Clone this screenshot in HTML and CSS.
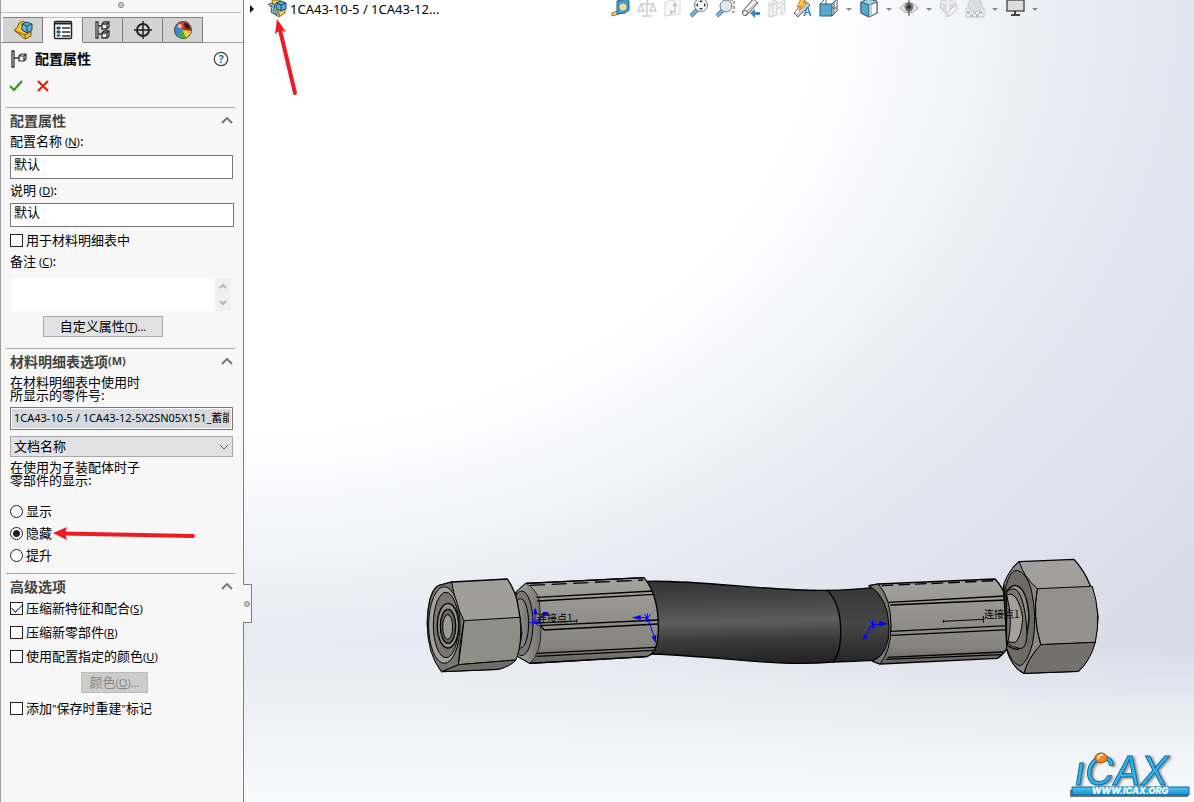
FILE: index.html
```html
<!DOCTYPE html>
<html lang="zh-CN">
<head>
<meta charset="utf-8">
<title>配置属性</title>
<link rel="stylesheet" href="styles.css">
</head>
<body>
<div class="app">
  <aside class="panel">
    <div class="grip"><span class="dot"></span></div>
    <nav class="tabs">
      <button class="tab" aria-label="设计树"><svg width="20" height="20" viewBox="0 0 20 20"><path d="M1 10l3-2 2-5 4-2 3 2 5 1v12l-6 3z" fill="#f3c42c" stroke="#7b5a08"/><path d="M2 11l10 4v4M12 15l6-3" fill="none" stroke="#7b5a08"/><path d="M9 4l5-2 5 2v6l-5 3-5-3z" fill="#62b3d8" stroke="#164a68"/><path d="M9 4l5 2 5-2M14 6v7" fill="none" stroke="#164a68"/></svg></button>
      <button class="tab active" aria-label="属性"><svg width="20" height="20" viewBox="0 0 20 20"><rect x="1.500" y="1.500" width="17" height="17" rx="1" fill="#fff" stroke="#222" stroke-width="1.500"/><path d="M2 3.500h16" stroke="#222" stroke-width="2"/><path d="M4 7h3v2H4zM4 11h3v2H4zM4 15h3v1H4z" fill="#2387af" stroke="#174e66"/><path d="M9 8h8M9 12h8M9 16h8" stroke="#333" stroke-width="1.300"/></svg></button>
      <button class="tab" aria-label="配置"><svg width="20" height="20" viewBox="0 0 20 20"><path d="M3 2v16h2V2zM5 6h5M5 14h5" fill="#fff" stroke="#333" stroke-width="1.300"/><path d="M9 4l2-2h5v5l-2 2H9zM9 4h5v5M14 4l2-2M9 13l2-2h5v5l-2 2H9zM9 13h5v5M14 13l2-2" fill="#eee" stroke="#333" stroke-width="1.300"/></svg></button>
      <button class="tab" aria-label="尺寸"><svg width="20" height="20" viewBox="0 0 20 20"><circle cx="10" cy="10" r="6" fill="none" stroke="#222" stroke-width="2"/><path d="M10 1v18M1 10h18" stroke="#222" stroke-width="1.500"/></svg></button>
      <button class="tab" aria-label="外观"><svg width="20" height="20" viewBox="0 0 20 20"><path d="M10 10L3 5a9 9 0 0 1 13-2z" fill="#df352b"/><path d="M10 10L3 5a9 9 0 0 0 1 12z" fill="#3b86ce"/><path d="M10 10L4 16a9 9 0 0 0 9 2z" fill="#3fae49"/><path d="M10 10l3 8a9 9 0 0 0 5-8z" fill="#f5cf28"/><path d="M10 10l8 1a9 9 0 0 0-5-9z" fill="#b92c22"/><path d="M11 3c4 0 6 3 6 6-3 0-6-2-6-6z" fill="#222"/><circle cx="7" cy="6" r="2" fill="#fff" opacity=".7"/><circle cx="10" cy="10" r="8.500" fill="none" stroke="#555"/></svg></button>
    </nav>
    <header class="title-row">
      <svg width="18" height="18" viewBox="0 0 18 18"><path d="M2 1v16h2V1zM4 8h6" fill="#fff" stroke="#333" stroke-width="1.300"/><path d="M9 6l2-2h5v5l-2 2H9zM9 6h5v5M14 6l2-2" fill="#eee" stroke="#333" stroke-width="1.200"/></svg>
      <h1>配置属性</h1>
      <button class="plain help" aria-label="帮助"><svg width="16" height="16" viewBox="0 0 16 16"><circle cx="8" cy="8" r="6.700" fill="#fff" stroke="#444" stroke-width="1.200"/><text x="8" y="12" class="help-mark">?</text></svg></button>
    </header>
    <div class="confirm">
      <button class="plain" aria-label="确定"><svg width="14" height="12" viewBox="0 0 14 12"><path d="M1 6l4 4 8-9" fill="none" stroke="#2f9a12" stroke-width="2.200"/></svg></button>
      <button class="plain" aria-label="取消"><svg width="12" height="12" viewBox="0 0 12 12"><path d="M1 1l10 10M11 1L1 11" stroke="#e02500" stroke-width="2.200"/></svg></button>
    </div>

    <section class="group">
      <h2>配置属性<svg class="chev" width="12" height="7" viewBox="0 0 12 7"><path d="M1 6l5-5 5 5"/></svg></h2>
      <label class="caption" for="name">配置名称 <small>(<u>N</u>)</small>:</label>
      <input class="field" id="name" type="text" value="默认">
      <label class="caption second" for="desc">说明 <small>(<u>D</u>)</small>:</label>
      <input class="field wide" id="desc" type="text" value="默认">
      <label class="option tall"><input type="checkbox">用于材料明细表中</label>
      <label class="caption note" for="memo">备注 <small>(<u>C</u>)</small>:</label>
      <div class="memo">
        <textarea id="memo"></textarea>
        <div class="scroll">
          <svg width="8" height="6" viewBox="0 0 8 6"><path d="M1 5l3-3 3 3"/></svg>
          <svg width="8" height="6" viewBox="0 0 8 6"><path d="M1 1l3 3 3-3"/></svg>
        </div>
      </div>
      <button class="push custom">自定义属性<small>(<u>T</u>)...</small></button>
    </section>

    <section class="group">
      <h2>材料明细表选项<small>(M)</small><svg class="chev" width="12" height="7" viewBox="0 0 12 7"><path d="M1 6l5-5 5 5"/></svg></h2>
      <label class="para" for="part">在材料明细表中使用时<br>所显示的零件号:</label>
      <input class="field part" id="part" type="text" readonly value="1CA43-10-5 / 1CA43-12-5X2SN05X151_蓄能">
      <div class="select-box">
        <select aria-label="零件号来源"><option>文档名称</option></select>
        <svg width="10" height="6" viewBox="0 0 10 6"><path d="M1 1l4 4 4-4"/></svg>
      </div>
      <p class="para">在使用为子装配体时子<br>零部件的显示:</p>
      <div class="radios">
        <label class="option"><input type="radio" name="show">显示</label>
        <label class="option"><input type="radio" name="show" checked>隐藏
          <svg class="pointer" width="142" height="14" viewBox="0 0 142 14"><path d="M10 6.500L140 9" stroke="#ed1c24" stroke-width="4" stroke-linecap="round"/><path d="M0 6L14 0l-2 6.500L14 13z" fill="#ed1c24"/></svg>
        </label>
        <label class="option"><input type="radio" name="show">提升</label>
      </div>
    </section>

    <section class="group">
      <h2>高级选项<svg class="chev" width="12" height="7" viewBox="0 0 12 7"><path d="M1 6l5-5 5 5"/></svg></h2>
      <div class="checks">
        <label class="option"><input type="checkbox" checked><span>压缩新特征和配合<small>(<u>S</u>)</small></span></label>
        <label class="option"><input type="checkbox"><span>压缩新零部件<small>(<u>R</u>)</small></span></label>
        <label class="option"><input type="checkbox"><span>使用配置指定的颜色<small>(<u>U</u>)</small></span></label>
      </div>
      <button class="push color" disabled>颜色<small>(<u>O</u>)...</small></button>
      <label class="option rebuild"><input type="checkbox"><span>添加<small>"</small>保存时重建<small>"</small>标记</span></label>
    </section>
  </aside>

  <main class="viewport">
    <button class="handle" aria-label="折叠面板"><span class="dot"></span></button>
    <div class="topbar">
      <div class="tree">
        <svg width="6" height="8" viewBox="0 0 6 8"><path d="M1 0l4 4-4 4z" fill="#111"/></svg>
        <svg width="20" height="18" viewBox="0 0 20 18"><path d="M5 0h7l6 4v9l-6 4-5-3z" fill="#f4cf4a" stroke="#8a6a14"/><path d="M9 3l5-2 5 2v6l-5 2-5-2z" fill="#5da9d0" stroke="#174763"/><path d="M9 3l5 2 5-2M14 5v6" fill="none" stroke="#174763"/><path d="M2 6c3-3 5-1 4 2s-1 4 1 4 4 0 4 4" fill="none" stroke="#28536b" stroke-width="3.500"/><path d="M2 6c3-3 5-1 4 2s-1 4 1 4 4 0 4 4" fill="none" stroke="#a7d1e5" stroke-width="1.500"/></svg>
        <span>1CA43-10-5 / 1CA43-12...</span>
      </div>
      <div class="tools">
        <button class="plain" aria-label="测量"><svg width="20" height="18" viewBox="0 0 20 18"><path d="M7 11l-6 2v3l10-3" fill="#ffe08a" stroke="#806b35"/><path d="M6 1l9-2 3 2v9l-4 3-8 1z" fill="#4c9bc2" stroke="#27607d"/><circle cx="12" cy="7" r="3" fill="#ffd766" stroke="#efe8cf"/></svg></button>
        <button class="plain faded" aria-label="质量"><svg width="20" height="18" viewBox="0 0 20 18"><path d="M10 0v15M3 4h14M5 16h10M4 4L1 11h6zM16 4l-3 7h6z" fill="#eee" stroke="#888" stroke-width="1.500"/></svg></button>
        <button class="plain faded" aria-label="草图"><svg width="20" height="18" viewBox="0 0 20 18"><path d="M2 2l15-3v15L2 16z" fill="#f4f4f4" stroke="#999"/><path d="M7 12h5V4M7 12l2-2M7 12l2 2M10 6l2-3 2 3" fill="none" stroke="#777" stroke-width="1.500"/></svg></button>
        <button class="plain" aria-label="整屏显示"><svg width="20" height="18" viewBox="0 0 20 18"><path d="M8 10l-6 6" stroke="#447e9b" stroke-width="4"/><path d="M8 10l-6 6" stroke="#83bdd8" stroke-width="2"/><circle cx="12" cy="5" r="6.500" fill="#f5f8fa" stroke="#777"/><path d="M12 0l2 2h-4zM12 10l2-2h-4zM7 5l2-2v4zM17 5l-2-2v4z" fill="#333"/></svg></button>
        <button class="plain" aria-label="局部放大"><svg width="20" height="18" viewBox="0 0 20 18"><path d="M8 10l-6 6" stroke="#447e9b" stroke-width="4"/><path d="M8 10l-6 6" stroke="#83bdd8" stroke-width="2"/><path d="M15 0h4v12h-4" fill="none" stroke="#555" stroke-dasharray="3 2"/><circle cx="11" cy="6" r="6" fill="#dce8ef" stroke="#777"/></svg></button>
        <button class="plain" aria-label="上一视图"><svg width="20" height="18" viewBox="0 0 20 18"><path d="M1 12L12-1l5 4L5 16z" fill="#c9c9c7" stroke="#666"/><path d="M3 12L14 1" stroke="#fff" stroke-width="2"/><circle cx="4" cy="13" r="2.500" fill="#eee" stroke="#666"/><path d="M9 13l5-4v3h5v3h-5v3z" fill="#378bb6"/></svg></button>
        <button class="plain faded" aria-label="剖面"><svg width="20" height="18" viewBox="0 0 20 18"><path d="M2 4l6-4 4 3 6-3v12l-4 3v-8l-4 2v6l-6 2H2z" fill="#ddd" stroke="#888"/><path d="M6 5v11M10 3v6M14 6l4-3M2 5h4l4-3" stroke="#888" fill="none"/></svg></button>
        <button class="plain" aria-label="动态注解"><svg width="20" height="18" viewBox="0 0 20 18"><path d="M1 13L12 1l5 4L5 17z" fill="#ccc" stroke="#666"/><path d="M3 13L13 3" stroke="#fff" stroke-width="2"/><path d="M8-1L4 7l4-1-2 5 8-8h-4l3-4z" fill="#ffc84a" stroke="#d27c22"/><text x="10" y="16" class="note-letter">A</text></svg></button>
        <button class="plain" aria-label="视图定向"><svg width="20" height="18" viewBox="0 0 20 18"><path d="M1 4l5-5h12v12l-5 5M13 4l5-5M7 0v4M13 8h5M15 2v12" fill="#fff" stroke="#555"/><path d="M1 4h12v12H1z" fill="#59a8cd" stroke="#235f7d"/></svg></button>
        <i class="caret"></i>
        <button class="plain" aria-label="显示样式"><svg width="20" height="18" viewBox="0 0 20 18"><path d="M2 2l7-3 9 2v12l-8 4-8-4z" fill="#a0d4eb" stroke="#555"/><path d="M2 2l8 3v12l-8-4z" fill="#58a9cd" stroke="#235f7d"/><path d="M10 5l8-3v11l-8 4z" fill="#f4f6f7" stroke="#555"/><path d="M10 5l3-1v11l-3 2z" fill="#a0d4eb"/></svg></button>
        <i class="caret"></i>
        <button class="plain" aria-label="隐藏显示"><svg width="20" height="18" viewBox="0 0 20 18"><path d="M1 8q9-11 18 0-9 10-18 0z" fill="#eee" stroke="#999"/><circle cx="10" cy="7" r="4.500" fill="#777"/><circle cx="10" cy="7" r="2" fill="#222"/><path d="M10 0v16" stroke="#444"/></svg></button>
        <i class="caret"></i>
        <button class="plain faded" aria-label="编辑外观"><svg width="20" height="18" viewBox="0 0 20 18"><circle cx="9" cy="5" r="8" fill="#bbb" stroke="#888"/><path d="M2 2q8 3 14-1M9-2v15" stroke="#eee" stroke-width="2" fill="none"/><path d="M7 17l2-5 7-7 3 3-7 7z" fill="#eee" stroke="#777"/></svg></button>
        <button class="plain faded" aria-label="布景"><svg width="20" height="18" viewBox="0 0 20 18"><path d="M1 8h18v9H1z" fill="#eee" stroke="#777"/><path d="M2 11h3v3H2zM8 11h3v3H8zM14 11h3v3h-3zM5 14h3v3H5zM11 14h3v3h-3z" fill="#777"/><circle cx="10" cy="5" r="7" fill="#bbb" stroke="#888"/></svg></button>
        <i class="caret"></i>
        <button class="plain" aria-label="视图设置"><svg width="20" height="18" viewBox="0 0 20 18"><path d="M2 0h17v11H2z" fill="#ddd" stroke="#555" stroke-width="1.500"/><path d="M10 11v4M6 15h9" stroke="#444" stroke-width="2"/></svg></button>
        <i class="caret"></i>
      </div>
    </div>

    <svg class="scene" viewBox="244 0 950 802" aria-label="软管总成模型">
      <defs>
        <linearGradient id="rubber" x1="0" y1="0" x2=".06" y2="1"><stop offset="0" stop-color="#343434"/><stop offset=".2" stop-color="#414141"/><stop offset=".52" stop-color="#5d5d5d"/><stop offset=".75" stop-color="#3a3a3a"/><stop offset="1" stop-color="#252525"/></linearGradient>
        <linearGradient id="rubber2" x1="0" y1="0" x2="0" y2="1"><stop offset="0" stop-color="#373737"/><stop offset=".5" stop-color="#464646"/><stop offset="1" stop-color="#262626"/></linearGradient>
        <linearGradient id="steel" x1="0" y1="0" x2="0" y2="1"><stop offset="0" stop-color="#a5a39e"/><stop offset=".45" stop-color="#91908b"/><stop offset=".8" stop-color="#85847f"/><stop offset="1" stop-color="#62615e"/></linearGradient>
        <linearGradient id="ring" x1="0" y1="0" x2="1" y2="0"><stop offset="0" stop-color="#aaa8a3"/><stop offset="1" stop-color="#71706d"/></linearGradient>
      </defs>
      <path d="M280 30L295 93" stroke="#ed1c24" stroke-width="4" stroke-linecap="round"/>
      <path d="M277 19l9 13-6-2-5 4z" fill="#ed1c24"/>

      <g transform="translate(640 560) scale(.33333)" stroke="#000" stroke-width="4">
        <path d="M560 91Q640 90 700 82H725Q753 130 752 200T722 302L700 301Q640 305 578 306z" fill="url(#rubber2)"/>
        <path d="M20 64C190 60 380 94 562 91Q600 130 602 205T578 306C400 323 200 283 20 282z" fill="url(#rubber)"/>
      </g>

      <g transform="translate(420 560) scale(.33333)" stroke="#000" stroke-width="4" stroke-linejoin="round">
        <path d="M285 100L318 70 672 53Q712 100 715 190T680 290L330 310 285 285z" fill="url(#steel)"/>
        <path d="M318 70Q350 90 358 120L363 210Q363 280 330 310L290 287V95z" fill="url(#ring)" stroke-width="2"/>
        <ellipse cx="305" cy="190" rx="34" ry="97" fill="#777672" stroke-width="3"/>
        <ellipse cx="301" cy="190" rx="25" ry="74" fill="url(#ring)" stroke-width="3"/>
        <path d="M318 70L672 53M350 112L700 93M352 123L703 103M358 197L714 180M372 210L715 192M363 197l9 13M350 280L705 262M350 289L700 271M330 310L680 290" fill="none"/>
        <path d="M330 76L670 60" stroke-dasharray="45 20" fill="none"/>
        <path d="M95 66L262 57Q285 92 292 125L300 172 305 220Q300 265 288 290 275 315 235 328L65 335Q24 275 22 190 24 95 55 77z" fill="#a09e99"/>
        <path d="M132 182L300 172Q308 250 288 300L115 314Q125 250 132 182z" fill="#8d8f86" stroke-width="3"/>
        <path d="M65 335L115 314 288 300Q270 320 235 328z" fill="#6e6d69" stroke-width="3"/>
        <path d="M95 66Q105 130 132 182 118 250 115 314L65 335Q22 285 22 190 24 95 55 77z" fill="#777672" stroke-width="3"/>
        <ellipse cx="73" cy="195" rx="47" ry="115" fill="#a3a19c" stroke-width="3"/>
        <ellipse cx="78" cy="195" rx="38" ry="98" fill="#777672" stroke-width="3"/>
        <ellipse cx="84" cy="197" rx="32" ry="67" fill="#93918c"/>
        <ellipse cx="84" cy="199" rx="23" ry="51" fill="#666561"/>
        <ellipse cx="83" cy="201" rx="15" ry="37" fill="#9b9995" stroke-width="3"/>
        <path d="M345 190L470 183M470 178v10" fill="none" stroke-width="3"/>
        <g stroke="#00f" fill="#00f"><path d="M345 190v-30M345 188l32-27M326 188h38M335 178l20 20M355 178l-20 20M682 173h-30M682 173l24 65M672 163l20 20M692 163l-20 20M682 160v26" stroke-width="3"/><path d="M345 141l8 22h-13zM369 156h15v11h-15zM636 173l26-8v15zM707 250l-12-20 14-5z" stroke="none"/></g>
      </g>

      <g transform="translate(860 550) scale(.33333)" stroke="#000" stroke-width="4" stroke-linejoin="round">
        <path d="M27 107L55 102 405 87Q443 125 452 210T412 325L60 342 38 334Q91 310 92 230 90 140 27 107z" fill="url(#steel)"/>
        <path d="M27 107L55 102Q93 145 93 225T60 342L38 334Q89 310 87 230 84 140 27 107z" fill="#777672" stroke-width="3"/>
        <path d="M65 107L405 92" stroke-dasharray="35 15" fill="none"/>
        <path d="M86 157L434 138M91 165L438 150M93 244L444 227M94 256L447 239M83 322L430 306M78 328L425 314" fill="none"/>
        <path d="M478 35L642 28Q700 90 714 200 710 310 655 364L492 370Q460 355 443 306L430 110Q450 55 478 35z" fill="#a19f9a"/>
        <path d="M532 116L697 109Q724 190 706 277L542 284Q517 200 532 116z" fill="#92918c" stroke-width="3"/>
        <path d="M542 284L706 277Q690 335 655 364L492 370Q500 330 542 284z" fill="#73716f" stroke-width="3"/>
        <path d="M478 35Q490 80 532 116 516 200 542 284 500 330 492 370 455 350 440 300L432 100Q450 55 478 35z" fill="#8b8985" stroke-width="3"/>
        <path d="M437 110Q450 60 470 61 500 65 514 120 532 200 518 280 502 340 480 348 455 340 440 295z" fill="#6d6b68" stroke-width="3"/>
        <path d="M440 124Q455 103 470 107 502 118 507 203 500 292 472 298 455 297 442 285z" fill="#8f8d88"/>
        <path d="M440 125Q482 90 497 202T467 292Q448 290 440 270z" fill="#777672" stroke-width="3"/>
        <path d="M440 135Q473 120 488 202 486 260 465 278L444 275Q460 210 440 135z" fill="#a3a19c" stroke-width="3"/>
        <path d="M250 214L370 208M370 198v20M250 210v8" fill="none" stroke-width="3"/>
        <g stroke="#00f" fill="#00f"><path d="M38 223h30M38 223l-24 38M28 213l20 20M48 213l-20 20M38 210v26" stroke-width="3"/><path d="M84 221l-26-8v16zM9 272l2-19 13 6z" stroke="none"/></g>
      </g>
      <text x="537" y="622" class="mark">连接点1</text>
      <text x="984" y="618" class="mark">连接点1</text>
    </svg>

    <svg class="logo" width="124" height="52" viewBox="0 0 124 52" aria-label="iCAX">
      <defs><linearGradient id="sky" x1="0" y1="0" x2="0" y2="1"><stop offset="0" stop-color="#53c7f3"/><stop offset="1" stop-color="#168fcd"/></linearGradient></defs>
      <text x="7" y="35" class="brand">ıCAX</text>
      <ellipse cx="33" cy="8" rx="6" ry="5" fill="#f08a1c" stroke="#9a4d06"/><path d="M30 9q1-5 5-4" fill="none" stroke="#fff" stroke-width="1.500"/>
      <path d="M2 40h118v7H2z" fill="#222" opacity=".6"/>
      <path d="M4 37h117v8H4z" fill="url(#sky)" stroke="#08679b"/>
      <text x="62" y="44" class="site">WWW.ICAX.ORG</text>
    </svg>
  </main>
</div>
</body>
</html>
```
FILE: styles.css
```css
* { box-sizing: border-box; }
body {
  margin: 0;
  font: 13px/16px "Noto Sans", "Noto Sans CJK SC", sans-serif;
  color: #000;
}
button, input, select, textarea { font: inherit; color: inherit; margin: 0; }
svg { display: block; flex: none; }
small { font-size: 11px; }
.app { display: flex; min-height: 100vh; overflow: hidden; }

.panel {
  flex: 0 0 244px;
  background: #f7f7f7;
  border-left: 1px solid #a0a0a0;
  border-right: 1px solid #808080;
  font-family: "Noto Sans CJK SC", sans-serif;
}
.panel small, .panel .part { font-family: "Noto Sans", "Noto Sans CJK SC", sans-serif; }
.grip {
  height: 13px;
  display: flex;
  justify-content: center;
  padding-top: 2px;
  margin-right: 2px;
  border-bottom: 1px solid #c0c0c0;
}
.dot { width: 6px; height: 6px; border: 1px solid #888; border-radius: 50%; background: #ccc; }
.tabs { display: flex; height: 26px; margin-top: 4px; padding-left: 2px; border-bottom: 1px solid #a0a0a0; }
.tab {
  width: 40px;
  height: 26px;
  display: flex;
  align-items: center;
  justify-content: center;
  padding: 0;
  border: 1px solid #808080;
  border-left: 0;
  background: #d3d3d3;
}
.tab.active { background: #f7f7f7; border-bottom-color: #f7f7f7; border-top-color: #c0c0c0; }
.plain { border: 0; padding: 0; background: none; }
.title-row { display: flex; align-items: center; height: 32px; padding: 0 14px 0 9px; gap: 7px; }
h1 { flex: 1; margin: 0; padding-bottom: 2px; font-size: 14px; line-height: 20px; }
.help-mark { font: bold 11px "Noto Sans", sans-serif; fill: #1d7399; text-anchor: middle; }
.confirm { display: flex; align-items: center; gap: 14px; height: 22px; padding-left: 8px; }

.group {
  display: flex;
  flex-direction: column;
  align-items: stretch;
  margin: 0 8px 0 5px;
  padding: 0 2px 7px 4px;
  border-top: 1px solid #a6a6a6;
}
.confirm + .group { margin-top: 10px; padding-bottom: 11px; }
h2 { display: flex; align-items: center; height: 23px; margin: 0; padding-top: 1px; font-size: 14px; line-height: 20px; color: #444; }
.chev { margin-left: auto; }
.chev path { fill: none; stroke: #777; stroke-width: 2; }
.caption { height: 20px; line-height: 19px; }
.caption.second { height: 22px; line-height: 21px; }
.caption.note { height: 16px; line-height: 16px; }
.field { width: 100%; height: 24px; margin-top: 4px; padding: 0 3px 8px; border: 1px solid #777; border-radius: 0; background: #fff; outline: 0; }
.field.wide { width: calc(100% + 1px); margin-top: 2px; }
.field.part { height: 23px; margin-top: 6px; padding: 0 3px 4px; font-size: 11px; background: #d5d9e0; box-shadow: inset 0 0 0 1px #fff; }
.option { position: relative; display: flex; align-items: center; gap: 3px; height: 23px; }
.option.tall { height: 26px; }
.option input { appearance: none; width: 13px; height: 13px; border: 1px solid #222; background: #fff; flex: none; }
.option input[type="radio"] { border-radius: 50%; }
.option input[type="radio"]:checked { background: radial-gradient(circle, #222 0 3px, #fff 4px); }
.option input[type="checkbox"]:checked { display: grid; place-items: center; }
.option input[type="checkbox"]:checked::before { content: ""; width: 9px; height: 5px; margin-bottom: 3px; border: solid #333; border-width: 0 0 1px 1px; transform: rotate(-45deg); }
.memo { display: flex; height: 33px; margin: 9px 2px 0; }
.memo textarea { flex: 1; min-width: 0; border: 0; padding: 2px; resize: none; background: #fff; }
.scroll { width: 16px; display: flex; flex-direction: column; justify-content: space-between; align-items: center; padding: 5px 0; background: #f0f0f0; }
.scroll path { fill: none; stroke: #b5b5b5; stroke-width: 2; }
.push { height: 21px; padding: 0; line-height: 18px; border: 1px solid #a9a9a9; background: #e1e1e1; }
.custom { width: 120px; margin: 5px 0 0 33px; }
.color { width: 67px; margin: 4px 0 0 71px; }
.push:disabled { color: #858585; border-color: #bbb; background: #ccc; }
.para { margin: 3px 0 0; line-height: 13px; }
.select-box { display: grid; align-items: center; margin-top: 6px; }
.select-box select { grid-area: 1 / 1; appearance: none; height: 21px; padding: 0 3px 1px; border: 1px solid #a9a9a9; border-radius: 0; background: #e1e1e1; }
.select-box svg { grid-area: 1 / 1; justify-self: end; margin-right: 4px; pointer-events: none; }
.select-box path { fill: none; stroke: #555; }
.radios { margin-top: 14px; }
.radios .option { height: 22px; }
.pointer { position: absolute; left: 43px; top: 5px; }
.checks { display: grid; gap: 1px; }
.rebuild { margin-top: 4px; }

.viewport {
  position: relative;
  flex: 1;
  min-width: 0;
  background:
    linear-gradient(to bottom, #f9fafb00 80%, #f9fafb99 90%, #f9fafb 100%),
    radial-gradient(ellipse 1060px 800px at 0 0, #fff 0 54%, #f5f6fa 66%, #e7eaf3 80%, #dfe2ec 100%, #d7dbe7 120%);
}
.handle {
  position: absolute;
  z-index: 2;
  left: -1px;
  top: 584px;
  width: 9px;
  height: 39px;
  padding: 0;
  display: grid;
  place-items: center;
  border: 1px solid #808080;
  border-left: 0;
  background: #f7f7f7;
}
.topbar { display: flex; align-items: flex-start; height: 20px; }
.tree { flex: 0 0 367px; display: flex; align-items: center; height: 18px; padding-left: 5px; }
.tree svg + svg { margin: 0 3px 0 12px; }
.tools { display: flex; align-items: flex-start; gap: 6px; }
.tools .plain { height: 18px; }
.faded { opacity: .4; }
.caret { width: 8px; height: 18px; display: grid; place-items: center; }
.caret::before { content: ""; border: 3px solid transparent; border-top-color: #888; border-bottom: 0; }
.note-letter { font: bold 12px "Liberation Sans", sans-serif; fill: #2d86b3; }
.tools svg { overflow: visible; }
.scene { position: absolute; inset: 0; width: 100%; height: 100%; pointer-events: none; }
.mark { font: 10px "Noto Sans CJK SC", sans-serif; fill: #000; }
.logo { position: absolute; right: 2px; bottom: 0; overflow: visible; }
.brand { font: italic 40px Inter, sans-serif; fill: #35b4e8; stroke: #0b6fa5; filter: drop-shadow(2px 1px 1px #3338); }
.site { font: italic 800 9px Inter, sans-serif; fill: #fff; text-anchor: middle; }
```
